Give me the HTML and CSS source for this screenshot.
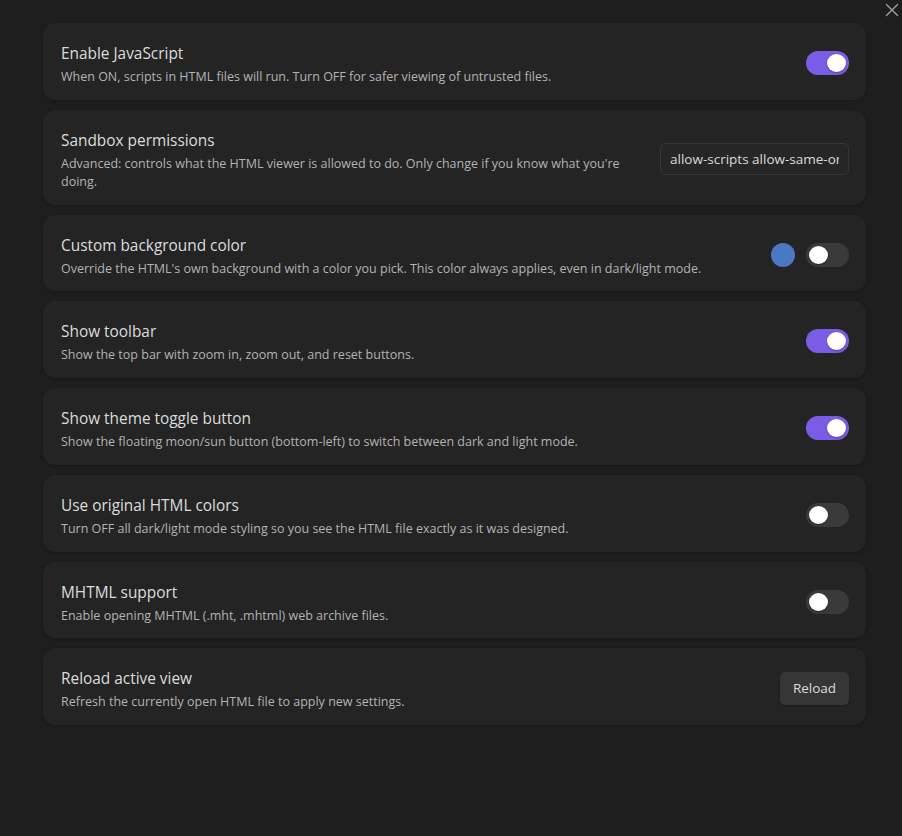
FILE: index.html
```html
<!DOCTYPE html>
<html lang="en">
<head>
<meta charset="utf-8">
<title>HTML viewer settings</title>
<link rel="stylesheet" href="styles.css">
</head>
<body>
<div class="modal">
  <button class="close" aria-label="Close">
    <svg width="14" height="14" viewBox="0 0 14 14"><path d="M1.5 1.5 L12.5 12.5 M12.5 1.5 L1.5 12.5" stroke="currentColor" stroke-width="1.4" fill="none" stroke-linecap="round"/></svg>
  </button>
  <div class="list">
    <div class="item">
      <div class="info">
        <div class="name">Enable JavaScript</div>
        <div class="desc">When ON, scripts in HTML files will run. Turn OFF for safer viewing of untrusted files.</div>
      </div>
      <div class="control"><div class="toggle on"><span class="knob"></span></div></div>
    </div>
    <div class="item">
      <div class="info">
        <div class="name">Sandbox permissions</div>
        <div class="desc">Advanced: controls what the HTML viewer is allowed to do. Only change if you know what you're doing.</div>
      </div>
      <div class="control"><input class="text" type="text" value="allow-scripts allow-same-origin allow-popups allow-forms"></div>
    </div>
    <div class="item">
      <div class="info">
        <div class="name">Custom background color</div>
        <div class="desc">Override the HTML's own background with a color you pick. This color always applies, even in dark/light mode.</div>
      </div>
      <div class="control"><span class="swatch"></span><div class="toggle"><span class="knob"></span></div></div>
    </div>
    <div class="item">
      <div class="info">
        <div class="name">Show toolbar</div>
        <div class="desc">Show the top bar with zoom in, zoom out, and reset buttons.</div>
      </div>
      <div class="control"><div class="toggle on"><span class="knob"></span></div></div>
    </div>
    <div class="item">
      <div class="info">
        <div class="name">Show theme toggle button</div>
        <div class="desc">Show the floating moon/sun button (bottom-left) to switch between dark and light mode.</div>
      </div>
      <div class="control"><div class="toggle on"><span class="knob"></span></div></div>
    </div>
    <div class="item">
      <div class="info">
        <div class="name">Use original HTML colors</div>
        <div class="desc">Turn OFF all dark/light mode styling so you see the HTML file exactly as it was designed.</div>
      </div>
      <div class="control"><div class="toggle"><span class="knob"></span></div></div>
    </div>
    <div class="item">
      <div class="info">
        <div class="name">MHTML support</div>
        <div class="desc">Enable opening MHTML (.mht, .mhtml) web archive files.</div>
      </div>
      <div class="control"><div class="toggle"><span class="knob"></span></div></div>
    </div>
    <div class="item">
      <div class="info">
        <div class="name">Reload active view</div>
        <div class="desc">Refresh the currently open HTML file to apply new settings.</div>
      </div>
      <div class="control"><button class="btn">Reload</button></div>
    </div>
  </div>
</div>
</body>
</html>
```
FILE: styles.css
```css
* { box-sizing: border-box; }
html, body {
  margin: 0;
  padding: 0;
  background: #1e1e1e;
  height: 100%;
}
body {
  font-family: "Open Sans", "Noto Sans", "Liberation Sans", sans-serif;
  color: #dadada;
  overflow: hidden;
}
.modal {
  position: relative;
  height: 100%;
  padding: 23px 36px 0 43px;
}
.close {
  position: absolute;
  top: 3px;
  right: 3px;
  width: 14px;
  height: 14px;
  padding: 0;
  border: 0;
  background: transparent;
  color: #a0a0a0;
  display: flex;
}
.list {
  display: flex;
  flex-direction: column;
  gap: 10px;
}
.item {
  display: flex;
  align-items: center;
  background: #242424;
  border-radius: 12px;
  padding: 21px 17px 13.75px 18px;
  box-shadow: 0 1px 3px rgba(0,0,0,0.25);
}
.info {
  flex: 1 1 auto;
  min-width: 0;
  margin-right: 20px;
}
.name {
  font-size: 15.4px;
  line-height: 20px;
  color: #dcdcdc;
  margin-bottom: 4px;
}
.desc {
  font-size: 12.5px;
  line-height: 18px;
  color: #b3b3b3;
}
.control {
  flex: none;
  display: flex;
  align-items: center;
  gap: 11px;
  margin-top: -4px;
}
.toggle {
  width: 43px;
  height: 24px;
  border-radius: 12px;
  background: #3a3a3a;
  padding: 3px;
  display: flex;
  justify-content: flex-start;
}
.toggle.on {
  background: #7b5ce6;
  justify-content: flex-end;
}
.knob {
  width: 19px;
  height: 18px;
  border-radius: 50%;
  background: #ffffff;
  box-shadow: 0 1px 2px rgba(0,0,0,0.3);
}
.swatch {
  width: 24px;
  height: 24px;
  border-radius: 50%;
  background: #4a78c2;
}
.text {
  width: 189px;
  height: 32px;
  background: #262626;
  border: 1px solid #363636;
  border-radius: 5px;
  color: #dadada;
  font-family: inherit;
  font-size: 13.5px;
  padding: 0 9px;
  outline: none;
}
.btn {
  height: 33px;
  width: 69px;
  border: 0;
  border-radius: 5px;
  background: #363636;
  color: #dadada;
  font-family: inherit;
  font-size: 13.5px;
  box-shadow: 0 1px 2px rgba(0,0,0,0.3);
}
```
